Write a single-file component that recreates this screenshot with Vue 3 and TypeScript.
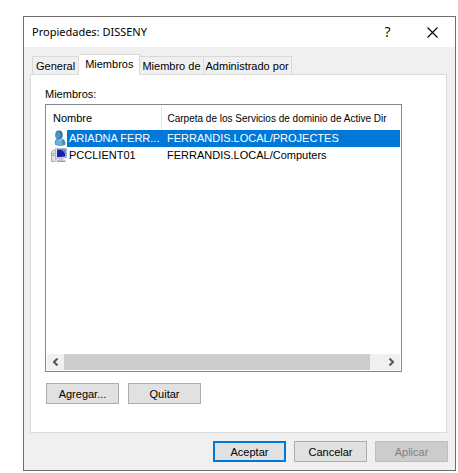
<script setup lang="ts">
import { ref } from 'vue'

interface Member {
  name: string
  folder: string
  kind: 'user' | 'computer'
}

const tabs: string[] = ['General', 'Miembros', 'Miembro de', 'Administrado por']
const activeTab = ref('Miembros')

const members: Member[] = [
  { name: 'ARIADNA FERR...', folder: 'FERRANDIS.LOCAL/PROJECTES', kind: 'user' },
  { name: 'PCCLIENT01', folder: 'FERRANDIS.LOCAL/Computers', kind: 'computer' },
]
const selected = ref(0)
</script>

<template>
  <main class="dialog" role="dialog" aria-labelledby="dialog-title">
    <header class="titlebar">
      <h1 id="dialog-title">Propiedades: DISSENY</h1>
      <button class="caption" type="button" aria-label="Ayuda">?</button>
      <button class="caption" type="button" aria-label="Cerrar">
        <svg width="11" height="11" viewBox="0 0 11 11">
          <path d="M.5 .5l10 10M10.5 .5l-10 10" fill="none" stroke="#000" stroke-width="1.1" />
        </svg>
      </button>
    </header>

    <div class="body">
      <div class="tabs" role="tablist">
        <button
          v-for="tab in tabs"
          :key="tab"
          type="button"
          role="tab"
          class="tab"
          :class="{ active: tab === activeTab }"
          :aria-selected="tab === activeTab"
          @click="activeTab = tab"
        >{{ tab }}</button>
      </div>

      <section class="panel" role="tabpanel">
        <p id="members-label" class="label">Miembros:</p>
        <div class="list">
          <div class="rows">
            <table aria-labelledby="members-label">
              <colgroup>
                <col class="col-name" />
                <col />
              </colgroup>
              <thead>
                <tr>
                  <th scope="col">Nombre</th>
                  <th scope="col" class="folder">Carpeta de los Servicios de dominio de Active Dir</th>
                </tr>
              </thead>
              <tbody>
                <tr
                  v-for="(member, index) in members"
                  :key="member.name"
                  :class="{ selected: index === selected }"
                  @click="selected = index"
                >
                  <td class="name">
                    <div class="member">
                      <svg v-if="member.kind === 'user'" width="18" height="17" viewBox="0 0 18 17">
                        <path d="M6 14.500C5.400 11.500 6.200 9.300 8.500 8.300l4.500 .4c2.400.8 3.700 2.800 3.500 5.800-1.900 1.500-8.200 1.900-10.500 0z" fill="#3f8fc2" />
                        <path d="M6.700 14.200c-.4-2.500.3-4.200 2-5.100 2 .3 4.500 1.500 5 5.800-2.300.4-5.200.3-7-.7z" fill="#69b0da" />
                        <path d="M8.800 8.800c.8 1.600 1.900 2.400 3.300 2.800l.9-2.400z" fill="#9fd0e8" />
                        <ellipse cx="10" cy="5" rx="3.700" ry="4.400" fill="#2d6f9e" />
                        <ellipse cx="9.200" cy="5.200" rx="2.600" ry="3.600" fill="#4a92c0" />
                      </svg>
                      <svg v-else width="18" height="17" viewBox="0 0 18 17">
                        <path d="M2.500 4.500l1.500-1h3v10l-1 1H2.500z" fill="#e3e4e7" stroke="#a5a7ad" />
                        <path d="M3.500 6.500h2M3.500 8.500h2" stroke="#8b8e96" />
                        <path d="M6.500 1.500h11v9l-11 1z" fill="#e6e7ee" stroke="#b4b6c2" />
                        <path d="M8 2.500h8.500v7L8 10.200z" fill="#1a20a8" />
                        <path d="M11.500 2.500h5V8c-1.200-2.700-2.800-4.500-5-5.500z" fill="#7388ea" />
                        <path d="M10 11h4v1.500l2.500 .5v1H8v-1l2-.5z" fill="#c6c8ce" />
                        <path d="M8 14.500h8.500" stroke="#999ca5" />
                      </svg>
                      <span>{{ member.name }}</span>
                    </div>
                  </td>
                  <td>{{ member.folder }}</td>
                </tr>
              </tbody>
            </table>
          </div>
          <div class="scrollbar">
            <button type="button" aria-label="Desplazar a la izquierda">
              <svg width="7" height="8" viewBox="0 0 7 8">
                <path d="M5.500 .5L2 4l3.500 3.500" fill="none" stroke="#555" stroke-width="2" />
              </svg>
            </button>
            <div class="track"><div class="thumb"></div></div>
            <button type="button" aria-label="Desplazar a la derecha">
              <svg width="7" height="8" viewBox="0 0 7 8">
                <path d="M1.500 .5L5 4 1.500 7.500" fill="none" stroke="#555" stroke-width="2" />
              </svg>
            </button>
          </div>
        </div>
        <div class="actions">
          <button class="btn" type="button">Agregar...</button>
          <button class="btn" type="button">Quitar</button>
        </div>
      </section>

      <footer class="footer">
        <button class="btn primary" type="button">Aceptar</button>
        <button class="btn" type="button">Cancelar</button>
        <button class="btn" type="button" disabled>Aplicar</button>
      </footer>
    </div>
  </main>
</template>

<style>
body {
  background: #fff;
}
</style>

<style scoped>
* {
  box-sizing: border-box;
}

.dialog {
  margin: 16px 2px 2px 23px;
  border: 1px solid #6e6e6e;
  background: #f0f0f0;
  color: #000;
  font-family: "Liberation Sans", Arial, sans-serif;
  font-size: 11px;
  line-height: 14px;
}

button {
  font: inherit;
  color: inherit;
  border: 0;
  padding: 0;
  background: none;
}

svg {
  display: block;
  flex: none;
}

.titlebar {
  display: flex;
  align-items: center;
  height: 30px;
  padding-left: 8px;
  background: #fff;
}

h1 {
  flex: 1;
  margin: 0;
  font-family: "Noto Sans", "Open Sans", sans-serif;
  font-size: 11px;
  font-weight: 400;
}

.caption {
  display: flex;
  align-items: center;
  justify-content: center;
  width: 45px;
  height: 30px;
  font-family: "Open Sans", sans-serif;
  font-size: 14px;
}

.body {
  padding: 7px 7px 8px 6px;
}

.tabs {
  display: flex;
  align-items: flex-end;
  padding-left: 2px;
}

.tab {
  height: 18px;
  padding: 0 2px;
  border: 1px solid #d9d9d9;
  border-bottom: 0;
}

.tab:first-child {
  padding: 0 3px;
}

.tab + .tab {
  border-left: 0;
}

.tab.active {
  height: 21px;
  margin-bottom: -1px;
  padding: 0 6px 3px;
  background: #fff;
}

.panel {
  margin-right: 1px;
  padding: 12px 44px 28px 14px;
  border: 1px solid #dcdcdc;
  background: #fff;
}

.label {
  margin: 0 0 3px;
}

.list {
  border: 1px solid #828790;
  padding: 1px;
  background: #fff;
}

.rows {
  min-height: 248px;
  overflow: hidden;
}

table {
  width: 100%;
  table-layout: fixed;
  border-collapse: collapse;
}

.col-name {
  width: 114px;
}

th,
td {
  height: 17px;
  padding: 0 0 0 6px;
  overflow: hidden;
  font-weight: 400;
  line-height: 17px;
  text-align: left;
  white-space: nowrap;
}

th {
  height: 24px;
  border-right: 1px solid #e5e5e5;
}

th.folder {
  border-right: 0;
  font-size: 10px;
}

td.name {
  padding: 0;
}

.member {
  display: flex;
  align-items: center;
  padding-left: 2px;
}

.member span {
  flex: 1;
  padding-left: 2px;
}

.selected td {
  background: #0078d7;
  color: #fff;
}

.selected td.name {
  background: #fff;
}

.selected .member span {
  background: #0078d7;
}

.scrollbar {
  display: flex;
  height: 16px;
  background: #f0f0f0;
}

.scrollbar button {
  display: flex;
  align-items: center;
  justify-content: center;
  width: 17px;
}

.track {
  flex: 1;
}

.thumb {
  width: 96%;
  height: 100%;
  background: #cdcdcd;
}

.actions {
  display: flex;
  gap: 9px;
  margin-top: 11px;
  padding-left: 1px;
}

.btn {
  width: 73px;
  height: 21px;
  border: 1px solid #adadad;
  background: #e1e1e1;
}

.btn.primary {
  border: 2px solid #0078d7;
}

.btn:disabled {
  border-color: #bfbfbf;
  background: #ccc;
  color: #838383;
}

.footer {
  display: flex;
  justify-content: flex-end;
  gap: 8px;
  margin-top: 8px;
}
</style>
